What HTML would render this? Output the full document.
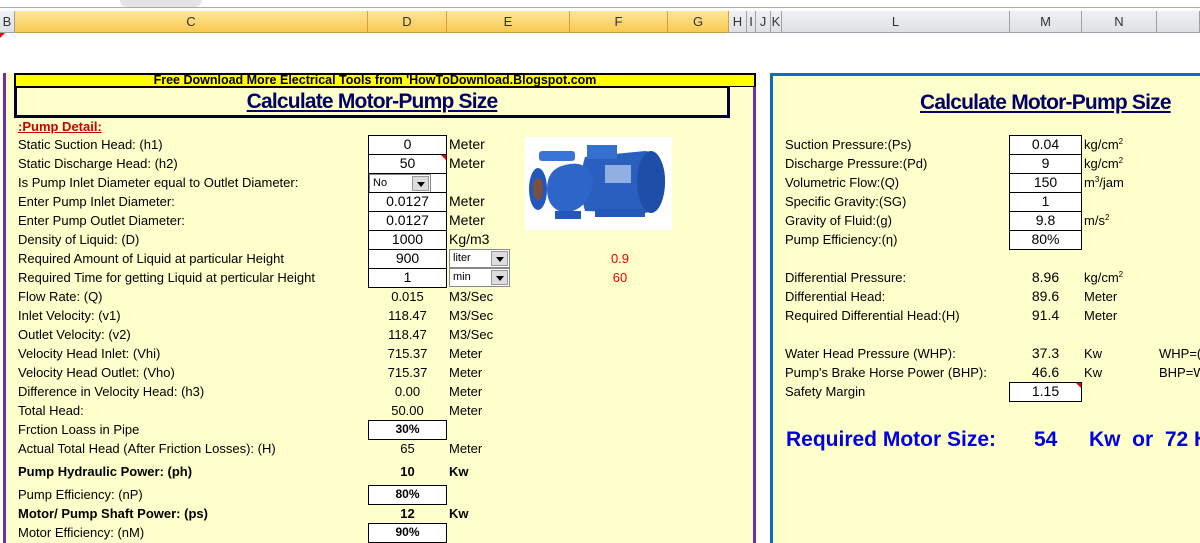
<!DOCTYPE html>
<html><head><meta charset="utf-8"><style>
*{margin:0;padding:0;box-sizing:border-box}
body{width:1200px;height:533px;overflow:hidden;background:#fff;position:relative;font-family:"Liberation Sans",Arial,sans-serif;font-size:13px;color:#000}
.a{position:absolute;white-space:nowrap;line-height:19px;height:19px}
.hd{position:absolute;top:11px;height:22px;line-height:22px;text-align:center;font-size:13px;color:#333;border-right:1px solid #a0a0a0;border-bottom:1px solid #c0a040}
.o{background:linear-gradient(#fde79a,#f9c94f);border-right-color:#d8a040}
.g{background:linear-gradient(#f0f1f4,#dde0e5);border-bottom-color:#9da3ad}
.box{position:absolute;background:#fff;border:1px solid #000;text-align:center;line-height:17px;height:20px;font-size:14px}
.c{text-align:center}
.b{font-weight:bold}
.dd{position:absolute;background:#fff;border:1px solid #888;height:19px;font-size:11px;line-height:17px;padding-left:3px}
.dd i{position:absolute;right:1px;top:1px;width:17px;height:15px;background:#ddd;border:1px solid #999}
.dd i:after{content:"";position:absolute;left:4px;top:5px;border-left:4px solid transparent;border-right:4px solid transparent;border-top:5px solid #000}
sup{font-size:8px;vertical-align:5px;line-height:0}
.red{color:#e00}
</style></head><body>
<div style="position:absolute;left:0;top:0;width:1200px;height:8px;background:#fff;border-bottom:1px solid #aaa"></div>
<div style="position:absolute;left:120px;top:0;width:82px;height:7px;background:#e4e4e4;border-radius:0 0 8px 8px"></div>
<div class="hd g" style="left:0;width:15px">B</div>
<div class="hd o" style="left:15px;width:353px">C</div>
<div class="hd o" style="left:368px;width:79px">D</div>
<div class="hd o" style="left:447px;width:123px">E</div>
<div class="hd o" style="left:570px;width:98px">F</div>
<div class="hd o" style="left:668px;width:61px">G</div>
<div class="hd g" style="left:729px;width:18px">H</div>
<div class="hd g" style="left:747px;width:9px">I</div>
<div class="hd g" style="left:756px;width:15px">J</div>
<div class="hd g" style="left:771px;width:11px">K</div>
<div class="hd g" style="left:782px;width:228px">L</div>
<div class="hd g" style="left:1010px;width:72px">M</div>
<div class="hd g" style="left:1082px;width:75px">N</div>
<div class="hd g" style="left:1157px;width:43px"></div>
<div style="position:absolute;left:0;top:33px;border-left:5px solid #e00;border-bottom:5px solid transparent;width:0;height:0"></div>

<!-- left panel -->
<div style="position:absolute;left:3px;top:73px;width:753px;height:470px;background:#ffffcc;border-left:3px solid #7030a0;border-right:3px solid #7030a0"></div>
<div style="position:absolute;left:14px;top:73px;width:742px;height:14px;background:#ffff00;border:2px solid #000;border-bottom:1px solid #000;font-weight:bold;font-size:12.5px;line-height:11px;text-align:center;padding-right:20px">Free Download More Electrical Tools from 'HowToDownload.Blogspot.com</div>
<div style="position:absolute;left:14px;top:87px;width:716px;height:31px;border:3px solid #000033;border-top:1px solid #000;text-align:center;font-weight:bold;font-size:21px;line-height:28px;color:#000066"><span style="text-decoration:underline;letter-spacing:-0.8px">Calculate Motor-Pump Size</span></div>
<div class="a b" style="left:18px;top:117px;color:#c00;text-decoration:underline;font-size:13px">:Pump Detail:</div>

<div class="a" style="left:18px;top:135px">Static Suction Head: (h1)</div>
<div class="a" style="left:18px;top:154px">Static Discharge Head: (h2)</div>
<div class="a" style="left:18px;top:173px">Is Pump Inlet Diameter equal to Outlet Diameter:</div>
<div class="a" style="left:18px;top:192px">Enter Pump Inlet Diameter:</div>
<div class="a" style="left:18px;top:211px">Enter Pump Outlet Diameter:</div>
<div class="a" style="left:18px;top:230px">Density of Liquid: (D)</div>
<div class="a" style="left:18px;top:249px">Required Amount of Liquid at particular Height</div>
<div class="a" style="left:18px;top:268px">Required Time for getting Liquid at perticular Height</div>
<div class="a" style="left:18px;top:287px">Flow Rate: (Q)</div>
<div class="a" style="left:18px;top:306px">Inlet Velocity: (v1)</div>
<div class="a" style="left:18px;top:325px">Outlet Velocity: (v2)</div>
<div class="a" style="left:18px;top:344px">Velocity Head Inlet: (Vhi)</div>
<div class="a" style="left:18px;top:363px">Velocity Head Outlet: (Vho)</div>
<div class="a" style="left:18px;top:382px">Difference in Velocity Head: (h3)</div>
<div class="a" style="left:18px;top:401px">Total Head:</div>
<div class="a" style="left:18px;top:420px">Frction Loass in Pipe</div>
<div class="a" style="left:18px;top:439px">Actual Total Head (After Friction Losses): (H)</div>
<div class="a b" style="left:18px;top:462px">Pump Hydraulic Power: (ph)</div>
<div class="a" style="left:18px;top:485px">Pump Efficiency: (nP)</div>
<div class="a b" style="left:18px;top:504px">Motor/ Pump Shaft Power: (ps)</div>
<div class="a" style="left:18px;top:523px">Motor Efficiency: (nM)</div>

<div class="box" style="left:368px;top:135px;width:79px">0</div>
<div class="box" style="left:368px;top:154px;width:79px">50</div>
<div style="position:absolute;left:441px;top:155px;border-top:5px solid #e00;border-left:5px solid transparent"></div>
<div class="box" style="left:368px;top:173px;width:79px"></div>
<div class="dd" style="left:369px;top:174px;width:62px">No<i></i></div>
<div class="box" style="left:368px;top:192px;width:79px">0.0127</div>
<div class="box" style="left:368px;top:211px;width:79px">0.0127</div>
<div class="box" style="left:368px;top:230px;width:79px">1000</div>
<div class="box" style="left:368px;top:249px;width:79px">900</div>
<div class="box" style="left:368px;top:268px;width:79px">1</div>
<div class="box b" style="left:368px;top:420px;width:79px;font-size:12px">30%</div>
<div class="box b" style="left:368px;top:485px;width:79px;font-size:12px">80%</div>
<div class="box b" style="left:368px;top:523px;width:79px;font-size:12px">90%</div>

<div class="a" style="left:449px;top:135px;font-size:14px">Meter</div>
<div class="a" style="left:449px;top:154px;font-size:14px">Meter</div>
<div class="a" style="left:449px;top:192px;font-size:14px">Meter</div>
<div class="a" style="left:449px;top:211px;font-size:14px">Meter</div>
<div class="a" style="left:449px;top:230px;font-size:14px">Kg/m3</div>
<div class="dd" style="left:449px;top:249px;width:61px">liter<i></i></div>
<div class="dd" style="left:449px;top:268px;width:61px">min<i></i></div>
<div class="a red c" style="left:590px;top:249px;width:60px">0.9</div>
<div class="a red c" style="left:590px;top:268px;width:60px">60</div>

<div class="a c" style="left:368px;top:287px;width:79px">0.015</div>
<div class="a c" style="left:368px;top:306px;width:79px">118.47</div>
<div class="a c" style="left:368px;top:325px;width:79px">118.47</div>
<div class="a c" style="left:368px;top:344px;width:79px">715.37</div>
<div class="a c" style="left:368px;top:363px;width:79px">715.37</div>
<div class="a c" style="left:368px;top:382px;width:79px">0.00</div>
<div class="a c" style="left:368px;top:401px;width:79px">50.00</div>
<div class="a c" style="left:368px;top:439px;width:79px">65</div>
<div class="a c b" style="left:368px;top:462px;width:79px">10</div>
<div class="a c b" style="left:368px;top:504px;width:79px">12</div>
<div class="a" style="left:449px;top:287px">M3/Sec</div>
<div class="a" style="left:449px;top:306px">M3/Sec</div>
<div class="a" style="left:449px;top:325px">M3/Sec</div>
<div class="a" style="left:449px;top:344px">Meter</div>
<div class="a" style="left:449px;top:363px">Meter</div>
<div class="a" style="left:449px;top:382px">Meter</div>
<div class="a" style="left:449px;top:401px">Meter</div>
<div class="a" style="left:449px;top:439px">Meter</div>
<div class="a b" style="left:449px;top:462px">Kw</div>
<div class="a b" style="left:449px;top:504px">Kw</div>

<!-- pump image -->
<svg style="position:absolute;left:525px;top:137px" width="147" height="93" viewBox="0 0 147 93">
<rect width="147" height="93" fill="#fff"/>
<path d="M60 20 L120 14 Q140 16 140 44 Q140 72 120 76 L60 74 Q52 46 60 20Z" fill="#2a5fc0"/>
<ellipse cx="126" cy="45" rx="14" ry="31" fill="#1e4fa8"/>
<rect x="62" y="8" width="30" height="14" fill="#3570d0"/>
<rect x="80" y="28" width="26" height="18" fill="#8fb0e0"/>
<path d="M40 28 Q62 22 68 42 Q66 72 40 76 Q22 72 22 52 Q22 32 40 28Z" fill="#2d66c8"/>
<rect x="14" y="14" width="36" height="10" rx="3" fill="#3a74d6"/>
<ellipse cx="13" cy="52" rx="9" ry="21" fill="#2458b8"/>
<ellipse cx="13" cy="52" rx="5" ry="11" fill="#7a5040"/>
<rect x="30" y="74" width="26" height="8" fill="#2458b8"/>
<rect x="70" y="72" width="50" height="8" fill="#2458b8"/>
</svg>

<!-- right panel -->
<div style="position:absolute;left:770px;top:73px;width:440px;height:470px;background:#ffffcc;border-left:3px solid #0070c0;border-top:3px solid #0070c0"></div>
<div class="a b" style="left:920px;top:90px;height:26px;line-height:26px;font-size:21px;color:#000066;text-decoration:underline;letter-spacing:-0.8px">Calculate Motor-Pump Size</div>

<div class="a" style="left:785px;top:135px">Suction Pressure:(Ps)</div>
<div class="a" style="left:785px;top:154px">Discharge Pressure:(Pd)</div>
<div class="a" style="left:785px;top:173px">Volumetric Flow:(Q)</div>
<div class="a" style="left:785px;top:192px">Specific Gravity:(SG)</div>
<div class="a" style="left:785px;top:211px">Gravity of Fluid:(g)</div>
<div class="a" style="left:785px;top:230px">Pump Efficiency:(η)</div>
<div class="box" style="left:1009px;top:135px;width:73px">0.04</div>
<div class="box" style="left:1009px;top:154px;width:73px">9</div>
<div class="box" style="left:1009px;top:173px;width:73px">150</div>
<div class="box" style="left:1009px;top:192px;width:73px">1</div>
<div class="box" style="left:1009px;top:211px;width:73px">9.8</div>
<div class="box" style="left:1009px;top:230px;width:73px">80%</div>
<div class="a" style="left:1084px;top:135px">kg/cm<sup>2</sup></div>
<div class="a" style="left:1084px;top:154px">kg/cm<sup>2</sup></div>
<div class="a" style="left:1084px;top:173px">m<sup>3</sup>/jam</div>
<div class="a" style="left:1084px;top:211px">m/s<sup>2</sup></div>

<div class="a" style="left:785px;top:268px">Differential Pressure:</div>
<div class="a" style="left:785px;top:287px">Differential Head:</div>
<div class="a" style="left:785px;top:306px">Required Differential Head:(H)</div>
<div class="a c" style="left:1009px;top:268px;width:73px;font-size:14px">8.96</div>
<div class="a c" style="left:1009px;top:287px;width:73px;font-size:14px">89.6</div>
<div class="a c" style="left:1009px;top:306px;width:73px;font-size:14px">91.4</div>
<div class="a" style="left:1084px;top:268px">kg/cm<sup>2</sup></div>
<div class="a" style="left:1084px;top:287px">Meter</div>
<div class="a" style="left:1084px;top:306px">Meter</div>

<div class="a" style="left:785px;top:344px">Water Head Pressure (WHP):</div>
<div class="a" style="left:785px;top:363px">Pump's Brake Horse Power (BHP):</div>
<div class="a" style="left:785px;top:382px">Safety Margin</div>
<div class="a c" style="left:1009px;top:344px;width:73px;font-size:14px">37.3</div>
<div class="a c" style="left:1009px;top:363px;width:73px;font-size:14px">46.6</div>
<div class="box" style="left:1009px;top:382px;width:73px">1.15</div>
<div style="position:absolute;left:1076px;top:383px;border-top:5px solid #e00;border-left:5px solid transparent"></div>
<div class="a" style="left:1084px;top:344px">Kw</div>
<div class="a" style="left:1084px;top:363px">Kw</div>
<div class="a" style="left:1159px;top:344px">WHP=(</div>
<div class="a" style="left:1159px;top:363px">BHP=W</div>

<div class="a b" style="left:786px;top:427px;height:26px;line-height:26px;font-size:21px;color:#0000e0">Required Motor Size:</div>
<div class="a b" style="left:1034px;top:427px;height:26px;line-height:26px;font-size:21px;color:#0000e0">54</div>
<div class="a b" style="left:1089px;top:427px;height:26px;line-height:26px;font-size:21px;color:#0000e0">Kw&nbsp; or&nbsp; 72 HP</div>
</body></html>
